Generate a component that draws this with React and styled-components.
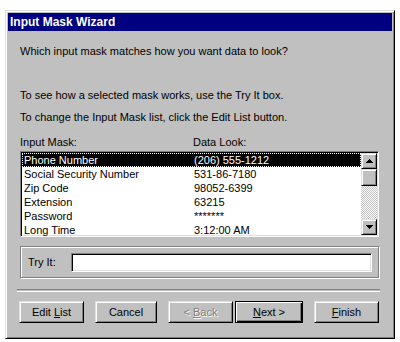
import React from "react";
import styled, { createGlobalStyle } from "styled-components";

const GlobalStyle = createGlobalStyle`
  body {
    margin: 0;
    background: #ffffff;
    font-family: "Liberation Sans", Arial, sans-serif;
    font-size: 11px;
    color: #000;
  }
`;

// classic raised / sunken edges
const raised = `
  border: 1px solid;
  border-color: #dfdfdf #000 #000 #dfdfdf;
  box-shadow: inset 1px 1px #fff, inset -1px -1px #808080;
`;

const sunken = `
  border: 1px solid;
  border-color: #808080 #fff #fff #808080;
  box-shadow: inset 1px 1px #000, inset -1px -1px #dfdfdf;
`;

const Window = styled.div`
  box-sizing: border-box;
  width: 390px;
  height: 329px;
  margin: 10px 0 0 5px;
  padding: 2px;
  background: #c0c0c0;
  ${raised}
  display: flex;
  flex-direction: column;
`;

const TitleBar = styled.div`
  height: 18px;
  background: #000080;
  color: #fff;
  font-weight: bold;
  font-size: 12px;
  display: flex;
  align-items: center;
  padding-left: 2px;
`;

const Body = styled.div`
  padding: 0 13px 0 12px;
  display: flex;
  flex-direction: column;
`;

const Line = styled.div`
  line-height: 14px;
  margin-top: ${(p) => p.$top || 0}px;
  white-space: nowrap;
`;

const Columns = styled.div`
  display: grid;
  grid-template-columns: 173px 1fr;
  line-height: 14px;
  margin-top: 11px;
`;

const ListBox = styled.div`
  box-sizing: border-box;
  height: 86px;
  margin-top: 2px;
  background: #fff;
  padding: 1px 1px 0 1px;
  ${sunken}
  display: flex;
`;

const Rows = styled.div`
  flex: 1;
  overflow: hidden;
`;

const Row = styled.div`
  display: grid;
  grid-template-columns: 170px 1fr;
  height: 14px;
  line-height: 14px;
  background: ${(p) => (p.$selected ? "#000" : "transparent")};
  color: ${(p) => (p.$selected ? "#fff" : "#000")};
  outline: ${(p) => (p.$selected ? "1px dotted #fff" : "none")};
  outline-offset: -1px;
  span {
    padding-left: 2px;
    white-space: nowrap;
  }
`;

const ScrollBar = styled.div`
  width: 16px;
  display: flex;
  flex-direction: column;
  padding-bottom: 1px;
`;

const ScrollButton = styled.div`
  box-sizing: border-box;
  width: 16px;
  height: ${(p) => p.$h || 16}px;
  background: #c0c0c0;
  ${raised}
  display: flex;
  align-items: center;
  justify-content: center;
`;

const Track = styled.div`
  flex: 1;
  background: repeating-conic-gradient(#c0c0c0 0 25%, #fff 0 50%) 0 0 / 2px 2px;
`;

const Arrow = ({ down }) => (
  <svg width="7" height="4" viewBox="0 0 7 4">
    <path d={down ? "M0 0h7L3.5 4z" : "M3.5 0L7 4H0z"} fill="#000" shapeRendering="crispEdges" />
  </svg>
);

const Group = styled.div`
  box-sizing: border-box;
  height: 32px;
  margin-top: 9px;
  border: 1px solid #808080;
  box-shadow: inset 1px 1px #fff, 1px 1px #fff;
  display: flex;
  align-items: center;
  padding: 0 6px 0 7px;
`;

const GroupLabel = styled.span`
  width: 43px;
`;

const TextBox = styled.div`
  box-sizing: border-box;
  flex: 1;
  height: 19px;
  background: #fff;
  ${sunken}
`;

const Separator = styled.div`
  height: 1px;
  margin: 11px -1px 0 -3px;
  border-top: 1px solid #808080;
  border-bottom: 1px solid #fff;
`;

const ButtonRow = styled.div`
  display: flex;
  margin-top: 9px;
`;

const Button = styled.div`
  box-sizing: border-box;
  flex: none;
  width: ${(p) => p.$w || 65}px;
  height: 22px;
  margin-left: ${(p) => p.$gap || 0}px;
  background: #c0c0c0;
  ${raised}
  ${(p) =>
    p.$default &&
    `
    border: 1px solid #000;
    box-shadow: inset 1px 1px #fff, inset -1px -1px #000, inset -2px -2px #808080;
  `}
  display: flex;
  align-items: center;
  justify-content: center;
  color: ${(p) => (p.$disabled ? "#808080" : "#000")};
  text-shadow: ${(p) => (p.$disabled ? "1px 1px #fff" : "none")};
  white-space: pre;
`;

const masks = [
  ["Phone Number", "(206) 555-1212"],
  ["Social Security Number", "531-86-7180"],
  ["Zip Code", "98052-6399"],
  ["Extension", "63215"],
  ["Password", "*******"],
  ["Long Time", "3:12:00 AM"],
];

export default function App() {
  return (
    <>
      <GlobalStyle />
      <Window>
        <TitleBar>Input Mask Wizard</TitleBar>
        <Body>
          <Line $top={13}>Which input mask matches how you want data to look?</Line>
          <Line $top={30}>To see how a selected mask works, use the Try It box.</Line>
          <Line $top={8}>To change the Input Mask list, click the Edit List button.</Line>
          <Columns>
            <span>Input Mask:</span>
            <span>Data Look:</span>
          </Columns>
          <ListBox>
            <Rows>
              {masks.map(([name, look], i) => (
                <Row key={name} $selected={i === 0}>
                  <span>{name}</span>
                  <span>{look}</span>
                </Row>
              ))}
            </Rows>
            <ScrollBar>
              <ScrollButton>
                <Arrow />
              </ScrollButton>
              <ScrollButton $h={17} />
              <Track />
              <ScrollButton>
                <Arrow down />
              </ScrollButton>
            </ScrollBar>
          </ListBox>
          <Group>
            <GroupLabel>Try It:</GroupLabel>
            <TextBox />
          </Group>
          <Separator />
          <ButtonRow>
            <Button $gap={-1}>
              <span>Edit <u>L</u>ist</span>
            </Button>
            <Button $gap={11} $w={62}>
              <span>Cancel</span>
            </Button>
            <Button $gap={11} $disabled>
              <span>&lt; <u>B</u>ack</span>
            </Button>
            <Button $gap={2} $w={68} $default>
              <span><u>N</u>ext &gt;</span>
            </Button>
            <Button $gap={11}>
              <span><u>F</u>inish</span>
            </Button>
          </ButtonRow>
        </Body>
      </Window>
    </>
  );
}
